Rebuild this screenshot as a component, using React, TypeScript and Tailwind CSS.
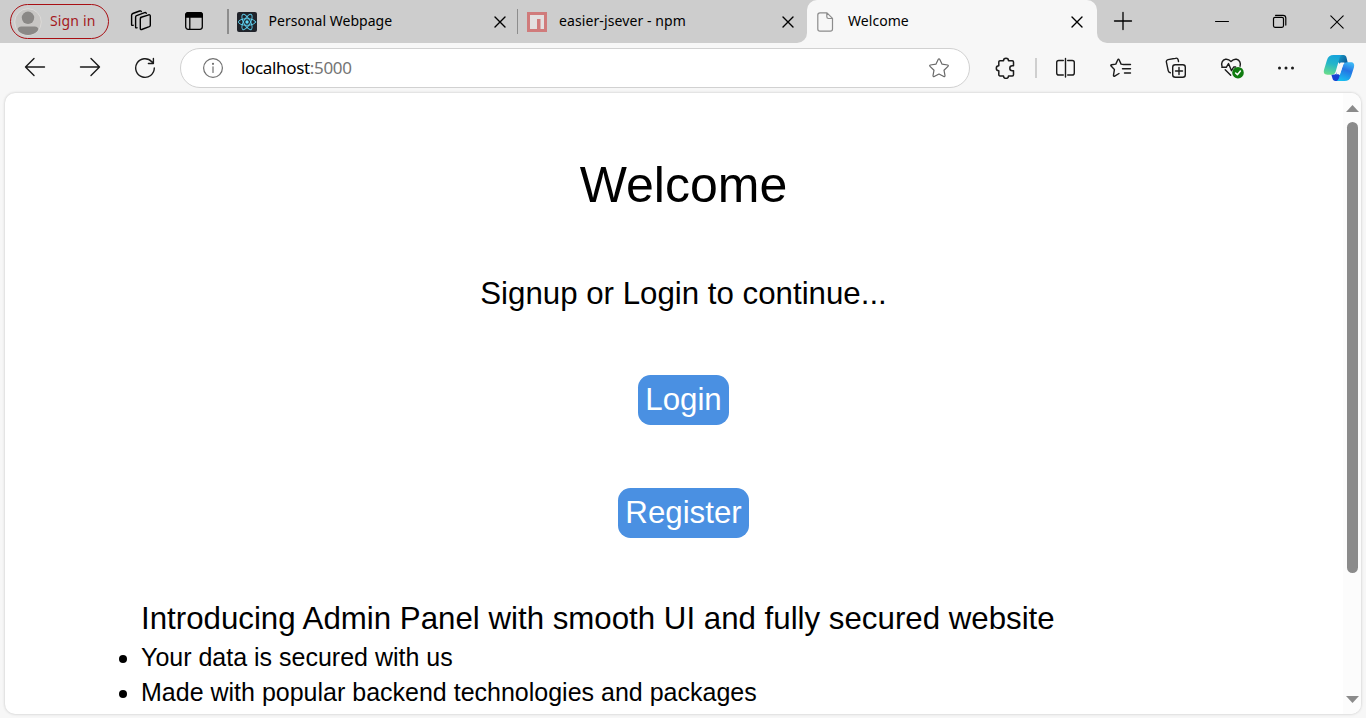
import type { ReactNode } from "react";

type GlyphProps = { className?: string; w?: number; h?: number; children: ReactNode; sw?: number };

function Glyph({ className = "", w = 24, h = 24, sw = 1.3, children }: GlyphProps) {
  return (
    <svg
      className={`shrink-0 ${className}`}
      width={w}
      height={h}
      viewBox={`0 0 ${w} ${h}`}
      fill="none"
      stroke="currentColor"
      strokeWidth={sw}
      strokeLinecap="round"
      strokeLinejoin="round"
    >
      {children}
    </svg>
  );
}

function TabClose() {
  return (
    <Glyph w={12} h={12} sw={1.4}>
      <path d="M1 1l10 10M11 1L1 11" />
    </Glyph>
  );
}

function ReactLogo() {
  return (
    <Glyph w={20} h={20} sw={1}>
      <rect width="20" height="20" rx="2" fill="#20232a" stroke="none" />
      <g stroke="#61dafb" strokeOpacity="0.85">
        <ellipse cx="10" cy="10" rx="8.6" ry="3.3" />
        <ellipse cx="10" cy="10" rx="8.6" ry="3.3" transform="rotate(60 10 10)" />
        <ellipse cx="10" cy="10" rx="8.6" ry="3.3" transform="rotate(120 10 10)" />
      </g>
      <circle cx="10" cy="10" r="1.7" fill="#61dafb" stroke="none" />
    </Glyph>
  );
}

function NpmLogo() {
  return (
    <Glyph w={20} h={20}>
      <path d="M0 0h20v20H0z" fill="#d07b7b" stroke="none" />
      <path d="M3 3h14v14h-3.5V7H10v10H3z" fill="#e3e0e0" stroke="none" />
    </Glyph>
  );
}

function TabStrip() {
  return (
    <div className="flex h-[43px] bg-[#f7f7f7]">
      <div className="flex w-[807px] items-center rounded-br-[10px] bg-[#cdcdcd]">
        <div className="ml-[10px] flex h-[35px] w-[99px] shrink-0 items-center rounded-full border-[1.5px] border-[#a80f14] pl-[3px] text-[#a4191d]">
          <svg width="28" height="28" viewBox="0 0 28 28" className="shrink-0">
            <defs>
              <clipPath id="avatar">
                <circle cx="14" cy="14" r="13" />
              </clipPath>
            </defs>
            <circle cx="14" cy="14" r="13.3" fill="#c8c6c4" stroke="#dcdad8" strokeWidth="1" />
            <g fill="#8a8886" clipPath="url(#avatar)">
              <circle cx="14" cy="9.800" r="6.200" />
              <path d="M3.500 22c0-2.300 1.500-3.500 3.800-3.500h13.400c2.300 0 3.800 1.200 3.800 3.500v6h-21z" />
            </g>
          </svg>
          <span className="ml-[8px] pb-[2px] text-[14px] tracking-[0.15px]">Sign in</span>
        </div>
        <Glyph w={22} h={22} sw={1.4} className="ml-[21px] -mt-px mr-px">
          <path d="M10.500 7.500l8.300-2.700c.9-.2 1.500.3 1.500 1.100v9.300c0 .7-.3 1.100-1 1.400l-7.600 2.900c-.8.3-1.400 0-1.400-.9V8.800c0-.7.3-1.100 1-1.300z" />
          <path d="M7 17.800c-.9.300-1.400 0-1.400-.9V7.300c0-.8.300-1.300 1-1.600l8-3c.9-.3 1.600-.2 1.700.7M3.200 15.300c-1 .3-1.600 0-1.600-.9V5.200c0-.9.400-1.400 1.200-1.700L9.600 1c.9-.3 1.500-.1 1.700.6" />
        </Glyph>
        <Glyph w={20} h={20} sw={1.3} className="ml-[31px] -mt-px -mr-px">
          <rect x="1.700" y="1.700" width="16.600" height="16.600" rx="2.500" />
          <path d="M1.700 6V4c0-1.500 1-2.300 2.300-2.300h12c1.500 0 2.300 1 2.300 2.300v2z" fill="currentColor" />
          <path d="M5.800 6v12" />
        </Glyph>
        <div className="ml-[24px] h-[25px] w-[1.500px] bg-[#8d8d8d]" />
        <div className="ml-[8px] flex w-[269px] items-center">
          <ReactLogo />
          <span className="ml-[12px] flex-1 whitespace-nowrap pb-[2px] text-[14px] tracking-[0.020px]">Personal Webpage</span>
          <TabClose />
        </div>
        <div className="ml-[11px] h-[25px] w-[1.500px] bg-[#8d8d8d]" />
        <div className="ml-[9px] flex w-[267px] items-center">
          <NpmLogo />
          <span className="ml-[12px] flex-1 whitespace-nowrap pb-[2px] text-[14px] tracking-[0.100px]">easier-jsever - npm</span>
          <TabClose />
        </div>
      </div>
      <div className="w-[290px] bg-[#cdcdcd]">
        <div className="flex h-full items-center rounded-t-[10px] bg-[#f7f7f7] pl-[10px] pr-[14px]">
          <Glyph w={17} h={20} sw={1.200} className="text-[#8c8c8c]">
            <path d="M3 .8h7l5.500 5.500v10.700c0 1.400-.8 2.200-2.200 2.200H3C1.600 19.200.8 18.400.8 17V3C.8 1.600 1.600.8 3 .8zM9.800.8v4c0 1.100.6 1.700 1.700 1.700h4" />
          </Glyph>
          <span className="ml-[14px] flex-1 pb-[2px] text-[14px] tracking-[0.050px]">Welcome</span>
          <TabClose />
        </div>
      </div>
      <div className="flex flex-1 items-center rounded-bl-[10px] bg-[#cdcdcd]">
        <Glyph w={20} h={20} sw={1.300} className="ml-[16px] -mt-px">
          <path d="M1.500 10h17M10 1.500v17" />
        </Glyph>
        <Glyph w={14} h={14} sw={1} className="ml-[82px] -mt-[2px]">
          <path d="M.5 7.500h13" />
        </Glyph>
        <Glyph w={15} h={15} sw={1.200} className="ml-[43px]">
          <rect x="1.500" y="3.300" width="10" height="10" rx="1.500" />
          <path d="M3.500 1.300h7.500c1.800 0 2.800 1 2.800 2.800v7" />
        </Glyph>
        <Glyph w={14} h={14} sw={1.100} className="ml-[43px]">
          <path d="M.8.8l12.400 12.400M13.200.8L.8 13.200" />
        </Glyph>
      </div>
    </div>
  );
}

function CopilotLogo() {
  return (
    <svg width="32" height="28" viewBox="0 0 32 28" className="ml-[27px] shrink-0">
      <defs>
        <linearGradient id="cpA" x1="0.600" y1="0" x2="0.350" y2="1">
          <stop offset="0" stopColor="#16a3dc" />
          <stop offset="0.450" stopColor="#23b5c9" />
          <stop offset="1" stopColor="#68dc8d" />
        </linearGradient>
        <linearGradient id="cpB" x1="0.650" y1="0" x2="0.300" y2="1">
          <stop offset="0" stopColor="#3cb6f5" />
          <stop offset="0.400" stopColor="#2474e4" />
          <stop offset="1" stopColor="#18c0f0" />
        </linearGradient>
        <linearGradient id="cpC" x1="0" y1="0" x2="1" y2="0.600">
          <stop offset="0" stopColor="#1ba5d0" />
          <stop offset="1" stopColor="#0a5a96" />
        </linearGradient>
      </defs>
      <path d="M14 1h6.500c1.700 0 2.600 1 3 2.500l1.300 5.500h-3.800c-1.600 0-2.400.5-3 2l-3-3z" fill="url(#cpC)" />
      <path d="M18 27h-5.500c-1.700 0-2.600-1-3-2.500L8.300 20.500H11c1.500 0 2.300-.6 2.800-2l3.200 3z" fill="#1741d3" />
      <path d="M10.500 1h8.500c-1.500.5-2.200 2-2.700 4l-3.600 12.500c-.7 2.300-2 3.200-4.200 3.200H4.500c-3.300 0-4.300-2-3.400-5.200l2.900-9.500C5 2.500 7.200 1 10.500 1z" fill="url(#cpA)" />
      <path d="M21.500 27H13.500c1.500-.5 2.200-2 2.700-4L20 11.500c.7-2.300 2-3.200 4.200-3.200h3.300c3.300 0 4.300 2 3.400 5.200L28 22.500C27 25.500 24.800 27 21.500 27z" fill="url(#cpB)" />
      <path d="M17.600 8.500h4.200c-1.200.6-1.700 1.700-2.100 3.100l-2.100 6.300c-.5 1.600-1.300 2.400-3 2.400h-1.800c.9-.6 1.300-1.500 1.600-2.600l2.200-7.200c.3-1 .5-1.500 1-2z" fill="#f7f7f7" />
    </svg>
  );
}

function Toolbar() {
  return (
    <div className="flex h-[50px] items-center bg-[#f7f7f7] text-[#1b1b1b]">
      <Glyph w={22} h={20} sw={1.400} className="ml-[24px] -mt-[2px]">
        <path d="M20.500 10H1.500M10 1.500L1.500 10l8.500 8.500" />
      </Glyph>
      <Glyph w={22} h={20} sw={1.400} className="ml-[33px] -mt-[2px]">
        <path d="M1.500 10h19M12 1.500l8.500 8.500-8.500 8.500" />
      </Glyph>
      <Glyph w={22} h={22} sw={1.400} className="ml-[33px] -mt-px">
        <path d="M20.300 11A9.300 9.300 0 1 1 17.800 4.700L19.300 6.300M19.400 1.500v5h-5" />
      </Glyph>
      <div className="ml-[24px] flex h-[40px] w-[790px] items-center rounded-full border-[1.500px] border-[#d1d1d1] bg-white">
        <Glyph w={22} h={22} sw={1.200} className="ml-[20.500px] text-[#707070]">
          <circle cx="11" cy="11" r="9.400" />
          <path d="M11 9.800v5.700" />
          <circle cx="11" cy="6.800" r=".5" fill="currentColor" />
        </Glyph>
        <span className="ml-[17.500px] flex-1 whitespace-nowrap pb-px text-[17px] tracking-[-0.330px] text-black">
          localhost<span className="text-[#757575]">:5000</span>
        </span>
        <Glyph w={22} h={22} sw={1.200} className="mr-[19px] text-[#696969]">
          <path d="M10.300 2.300c.3-.6 1.100-.6 1.400 0l2.400 4.900 5.500.8c.7.1 1 .9.400 1.400l-4 3.800 1 5.400c.1.700-.6 1.200-1.200.9L11 17l-4.800 2.500c-.6.3-1.300-.2-1.200-.9l1-5.400-4-3.800c-.6-.5-.3-1.300.4-1.400l5.500-.8z" />
        </Glyph>
      </div>
      <Glyph w={22} h={22} sw={1.500} className="ml-[25px] -mt-px">
        <path d="M5 3.800h3.500a2.500 2.500 0 0 1 5 0h3.800c.7 0 1.200.5 1.200 1.200v3.700h-1.200a2.500 2.500 0 0 0 0 5h1.200v4c0 .7-.5 1.200-1.200 1.200h-3.800a2.500 2.500 0 0 1-5 0H5c-.7 0-1.200-.5-1.200-1.200v-4a2.500 2.500 0 0 1 0-5V5c0-.7.5-1.200 1.200-1.200z" />
      </Glyph>
      <div className="ml-[18px] h-[20px] w-[1.500px] bg-[#cfcfcf]" />
      <Glyph w={22} h={22} sw={1.400} className="ml-[18px] -mt-px">
        <path d="M8.300 3.500H3.800C2.500 3.500 1.700 4.300 1.700 5.600v10.300c0 1.300.8 2.100 2.100 2.100h4.500M12.700 3.500h4.500c1.300 0 2.100.8 2.100 2.100v10.300c0 1.300-.8 2.100-2.100 2.100h-4.500M10.500 1.500v18.500" />
      </Glyph>
      <Glyph w={22} h={22} sw={1.400} className="ml-[33px]">
        <path d="M13.600 7.500l-2.500-.4-2-4.400c-.3-.6-1-.6-1.300 0l-2 4.400-4.200.6c-.8.1-1 .8-.5 1.400l3.300 3.500-.9 5.600c-.1.800.6 1.200 1.200.9l4.300-2.600M14.500 7.500h6M12.500 11.700h8M14.500 16h6" />
      </Glyph>
      <Glyph w={22} h={22} sw={1.400} className="ml-[33px] -mt-px">
        <rect x="7.700" y="7.700" width="12.600" height="12.600" rx="2.500" />
        <path d="M14 10.500v7M10.500 14h7M5.300 15.800c-1.300-.3-1.900-1-2.100-2.200L1.400 5.200c-.3-1.300.4-2.300 1.700-2.600l7.500-1.400c1.300-.3 2.300.4 2.600 1.700l.3 1.600" />
      </Glyph>
      <Glyph w={26} h={22} sw={1.400} className="ml-[33px]">
        <path d="M2 9.200C1 6.200 2.300 3 5.500 2.300c2.200-.4 4 .6 5.500 2.200 1.500-1.600 3.300-2.600 5.500-2.200 3.200.7 4.500 3.900 3.500 6.900M1.800 10.300h4.500l2.200-3.800 3 7.200 2.200-3.700h2M5.200 12.800l5.500 5.500" />
        <circle cx="18" cy="15.700" r="5.800" fill="#107c10" stroke="none" />
        <path d="M15.600 16l1.800 1.700 3-3.700" stroke="white" strokeWidth="1.500" />
      </Glyph>
      <Glyph w={20} h={6} className="ml-[30px] -mt-px">
        <g fill="currentColor" stroke="none">
          <circle cx="3.500" cy="3" r="1.500" />
          <circle cx="10" cy="3" r="1.500" />
          <circle cx="16.500" cy="3" r="1.500" />
        </g>
      </Glyph>
      <CopilotLogo />
    </div>
  );
}

function Scrollbar() {
  return (
    <div className="flex w-[18px] shrink-0 flex-col items-center bg-[#fcfcfc] pt-[12px]">
      <svg width="13" height="7" viewBox="0 0 13 7" fill="#8b8b8b" className="shrink-0">
        <path d="M6.500 0L13 7H0z" />
      </svg>
      <div className="mt-[10px] h-[451px] w-[11px] shrink-0 rounded-full bg-[#8b8b8b]" />
      <svg width="13" height="7" viewBox="0 0 13 7" fill="#8b8b8b" className="mt-[123px] shrink-0">
        <path d="M0 0h13L6.500 7z" />
      </svg>
    </div>
  );
}

function PageButton({ children }: { children: ReactNode }) {
  return (
    <button className="h-[50px] rounded-[12.500px] bg-[#4a90e2] px-[7.500px] text-[31.250px] leading-[50px] text-white">
      {children}
    </button>
  );
}

export default function App() {
  return (
    <div className="flex h-[718px] w-[1366px] flex-col overflow-hidden bg-[#f7f7f7] font-['Segoe_UI','Noto_Sans',sans-serif] text-black">
      <TabStrip />
      <Toolbar />
      <div className="ml-[5px] flex h-[621px] w-[1356px] overflow-hidden rounded-[10px] bg-white font-['Liberation_Sans',Arial,sans-serif] shadow-[0_0_3px_rgba(0,0,0,0.22)]">
        <main className="flex flex-1 flex-col items-center pl-[19px] pt-[63px]">
          <h1 className="text-[50px] leading-[58px]">Welcome</h1>
          <p className="mt-[62px] text-[31.250px] leading-[36px]">Signup or Login to continue...</p>
          <div className="mt-[63px] flex flex-col items-center gap-[63px]">
            <PageButton>Login</PageButton>
            <PageButton>Register</PageButton>
          </div>
          <section className="mt-[62px] w-full pl-[117px]">
            <h2 className="text-[31.250px] leading-[38px]">Introducing Admin Panel with smooth UI and fully secured website</h2>
            <ul className="mt-[2px] list-outside list-disc text-[25px] leading-[35px]">
              <li>Your data is secured with us</li>
              <li>Made with popular backend technologies and packages</li>
            </ul>
          </section>
        </main>
        <Scrollbar />
      </div>
    </div>
  );
}
